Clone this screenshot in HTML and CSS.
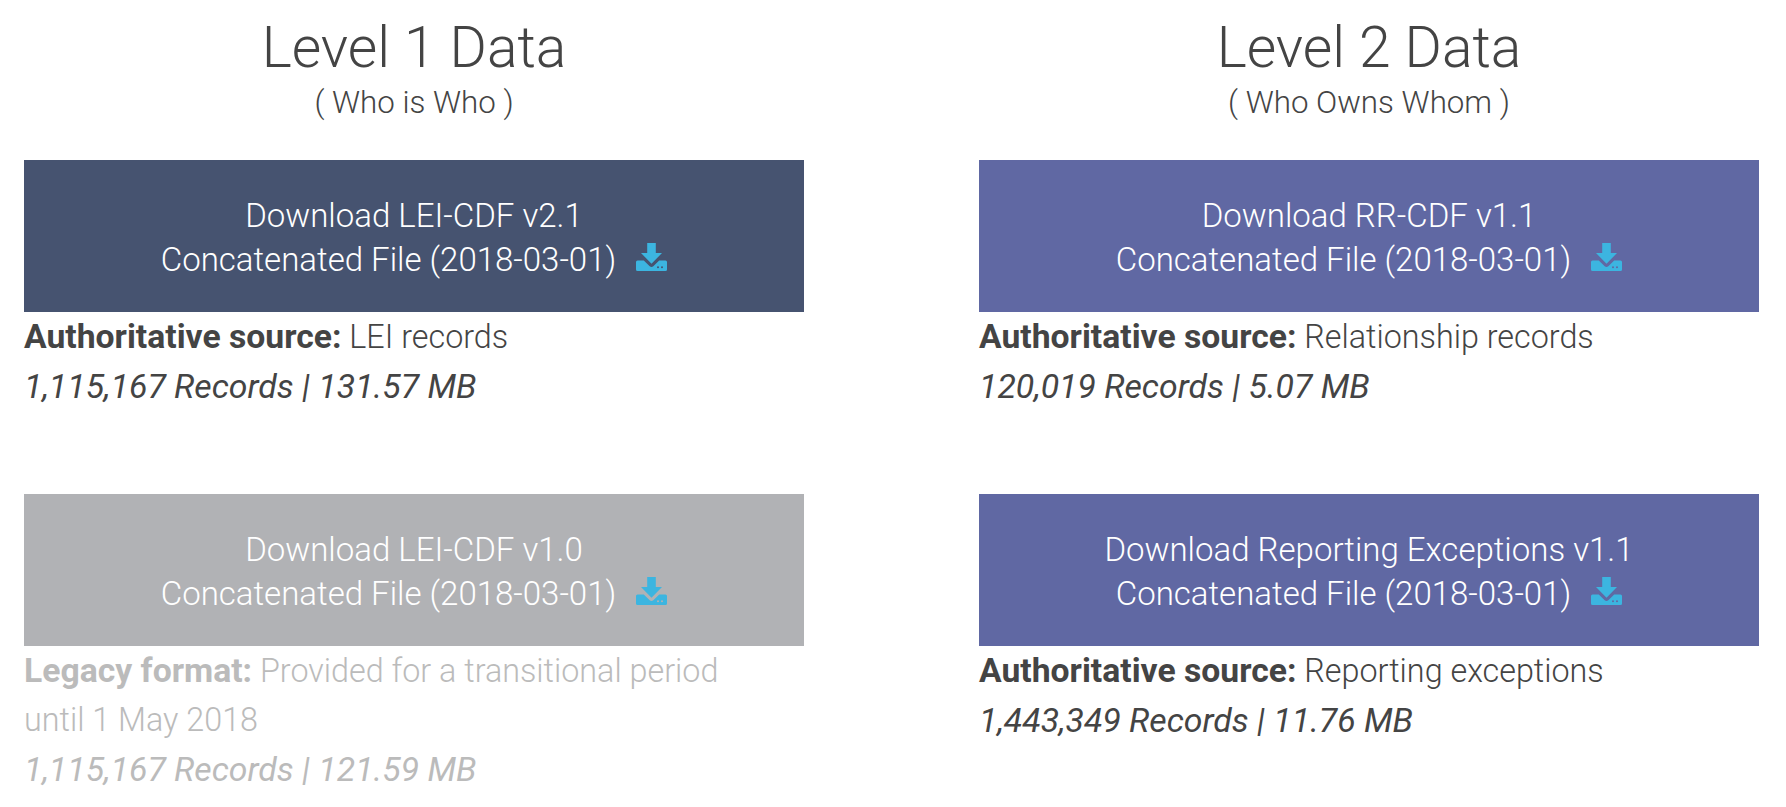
FILE: index.html
```html
<!DOCTYPE html>
<html lang="en">
<head>
    <meta charset="UTF-8">
    <title>Level 1 and Level 2 Data</title>
    <link rel="stylesheet" href="styles.css">
</head>
<body>
    <svg class="icon-defs" width="0" height="0">
        <symbol id="download-icon" viewBox="0 0 31 28">
            <path d="M11.200 0h8.600v10h6.200L15.500 20.800 5 10h6.200z"/>
            <path fill-rule="evenodd" d="M1.500 17.500H7.800L13.700 23.300q1.800 1.500 3.600 0L23.200 17.500H29.500q1.500 0 1.500 1.500V26.500q0 1.500-1.500 1.500H1.500Q0 28 0 26.500V19Q0 17.500 1.500 17.500zM22 23.300a1 1 0 1 0 0 2 1 1 0 0 0 0-2zM26 23.300a1 1 0 1 0 0 2 1 1 0 0 0 0-2z"/>
        </symbol>
    </svg>
    <main class="data-grid">
        <section class="data-col">
            <h2 class="col-title">Level 1 Data</h2>
            <p class="col-subtitle">( Who is Who )</p>

            <div class="data-item">
                <a class="download-box box-navy" href="#">
                    Download LEI-CDF v2.1<br>
                    Concatenated File (2018-03-01)
                    <svg class="download-icon"><use href="#download-icon"/></svg>
                </a>
                <p class="item-line"><strong>Authoritative source:</strong> LEI records</p>
                <p class="item-line"><em>1,115,167 Records | 131.57 MB</em></p>
            </div>

            <div class="data-item legacy">
                <a class="download-box box-gray" href="#">
                    Download LEI-CDF v1.0<br>
                    Concatenated File (2018-03-01)
                    <svg class="download-icon"><use href="#download-icon"/></svg>
                </a>
                <p class="item-line"><strong>Legacy format:</strong> Provided for a transitional period<br>until 1 May 2018</p>
                <p class="item-line"><em>1,115,167 Records | 121.59 MB</em></p>
            </div>
        </section>

        <section class="data-col">
            <h2 class="col-title">Level 2 Data</h2>
            <p class="col-subtitle">( Who Owns Whom )</p>

            <div class="data-item">
                <a class="download-box box-purple" href="#">
                    Download RR-CDF v1.1<br>
                    Concatenated File (2018-03-01)
                    <svg class="download-icon"><use href="#download-icon"/></svg>
                </a>
                <p class="item-line"><strong>Authoritative source:</strong> Relationship records</p>
                <p class="item-line"><em>120,019 Records | 5.07 MB</em></p>
            </div>

            <div class="data-item">
                <a class="download-box box-purple" href="#">
                    Download Reporting Exceptions v1.1<br>
                    Concatenated File (2018-03-01)
                    <svg class="download-icon"><use href="#download-icon"/></svg>
                </a>
                <p class="item-line"><strong>Authoritative source:</strong> Reporting exceptions</p>
                <p class="item-line"><em>1,443,349 Records | 11.76 MB</em></p>
            </div>
        </section>
    </main>
</body>
</html>
```

FILE: styles.css
```css
body {
    margin: 0;
    background: #fff;
    color: #444;
    font-family: Roboto, "Liberation Sans", sans-serif;
    font-weight: 300;
    font-size: 32.3px;
    line-height: 49px;
}
.icon-defs {
    display: block;
}
.data-grid {
    display: grid;
    grid-template-columns: 780px 780px;
    column-gap: 175px;
    padding: 0 27px 0 24px;
}
.col-title {
    margin: 0;
    padding-top: 17px;
    text-align: center;
    font-size: 57px;
    font-weight: 300;
    line-height: 62px;
}
.col-subtitle {
    margin: 3px 0 36px;
    text-align: center;
    font-size: 31.3px;
    line-height: 42px;
}
.data-item {
    height: 334px;
}
.download-box {
    display: block;
    height: 152px;
    box-sizing: border-box;
    padding: 34px 0 0;
    color: #fff;
    text-align: center;
    font-size: 33px;
    line-height: 44px;
    text-decoration: none;
}
.box-navy {
    background: #465370;
}
.box-purple {
    background: #6068a3;
}
.box-gray {
    background: #b1b2b5;
}
.download-icon {
    width: 31px;
    height: 28px;
    margin-left: 12px;
    fill: #3cb5e0;
    vertical-align: 0;
}
.item-line {
    margin: 0;
}
.item-line strong {
    font-size: 33.7px;
    font-weight: 700;
}
.item-line em {
    font-size: 33.8px;
    font-weight: 400;
}
.legacy .item-line {
    color: #bbb;
}
```
